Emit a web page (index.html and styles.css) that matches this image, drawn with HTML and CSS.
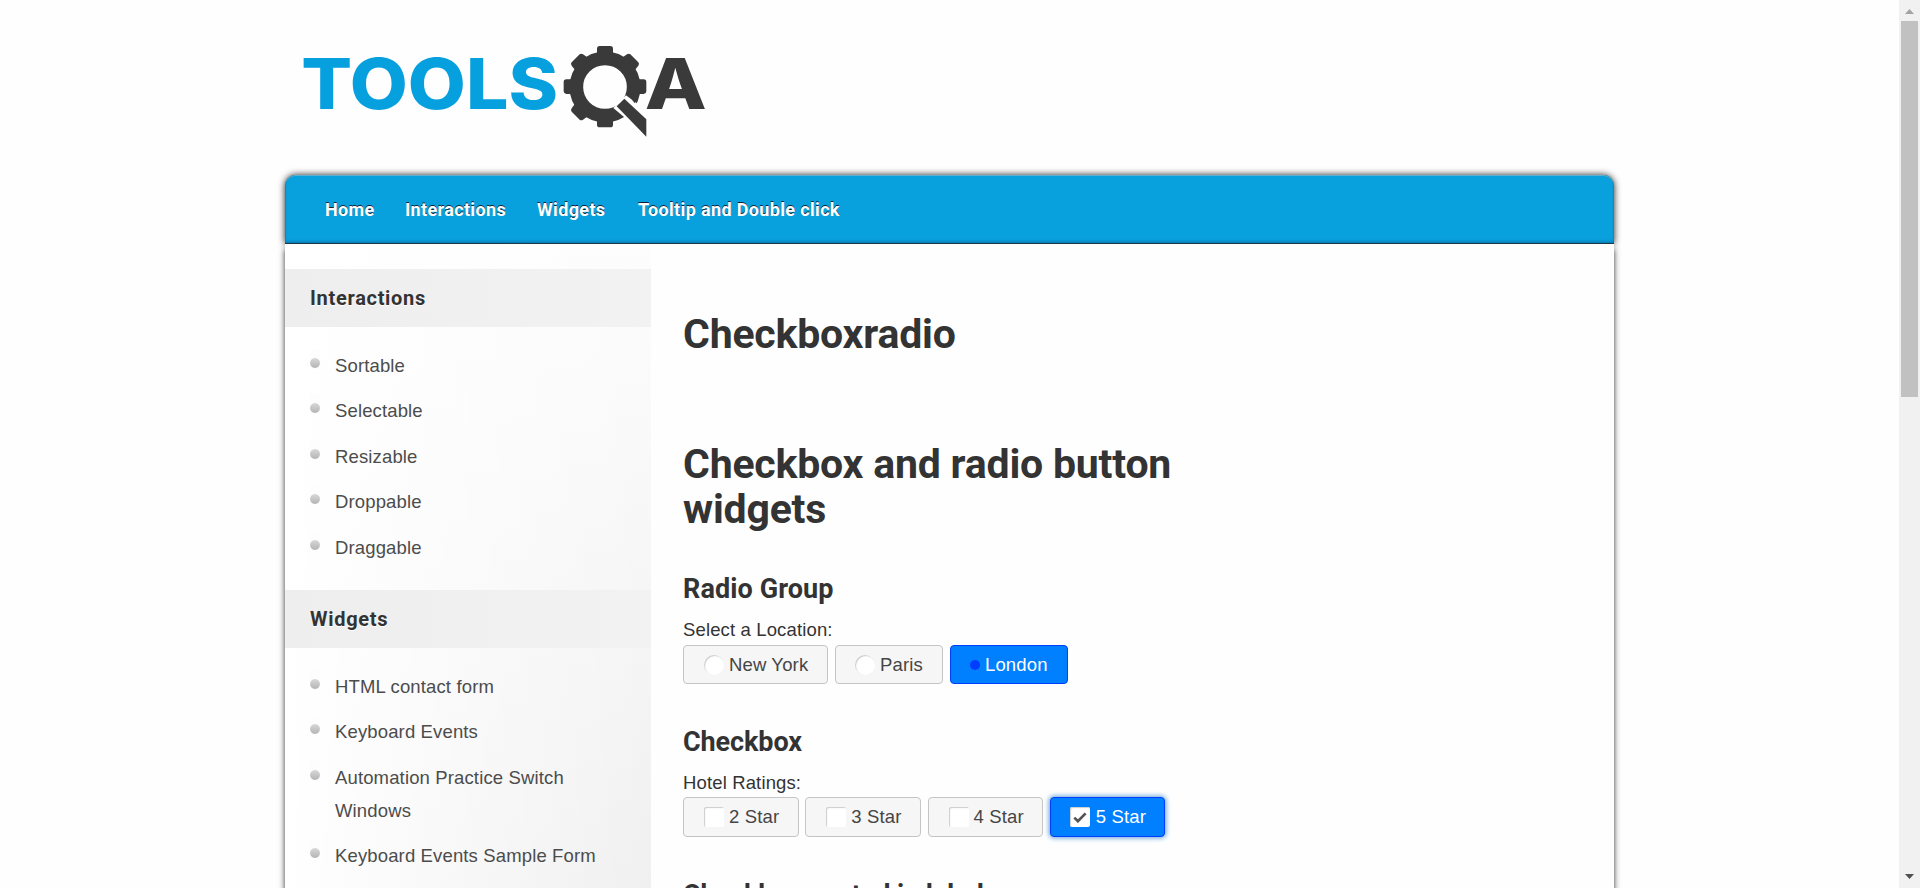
FILE: index.html
```html
<!DOCTYPE html>
<html lang="en">
<head>
<meta charset="utf-8">
<title>Checkboxradio</title>
<link rel="stylesheet" href="styles.css">
</head>
<body>
<div class="page">
  <div class="wrap">
    <header class="header">
      <svg class="logo" viewBox="0 0 1320 360" width="440" height="120">
        <text class="logo-tools" x="64" y="236" textLength="770" lengthAdjust="spacingAndGlyphs">TOOLS</text>
        <g fill="#3a3a3a">
          <circle cx="975" cy="171" r="86" fill="none" stroke="#3a3a3a" stroke-width="41"/>
          <path d="M943 85q8-2 8-10V56q0-8 8-8h32q8 0 8 8v19q0 8 8 10z"/>
          <path d="M943 257q8 2 8 10v17q0 8 8 8h32q8 0 8-8v-17q0-8 8-10z"/>
          <path d="M885 140q-2 7-9 8h-17q-8 0-8 8v28q0 7 8 8h17q7 1 9 9z"/>
          <path d="M1065 140q2 7 9 8h17q8 0 8 8v28q0 7-8 8h-17q-7 1-9 9z"/>
          <path d="M884 134q6-7 2-13l-11-14q-4-6 0-10l24-24q4-4 10 0l15 10q7 4 14-3z"/>
          <path d="M1066 134q-6-7-2-13l11-14q4-6 0-10l-24-24q-4-4-10 0l-15 10q-7 4-14-3z"/>
          <path d="M884 206q6 7 2 14l-11 15q-4 6 0 10l24 24q4 4 10 0l15-11q7-4 14 3z"/>
          <path d="M1000 234l38-38 30 22 50 46v70z" fill="#fefefe"/>
          <path d="M1042 190l22 30 14-40z"/>
          <path d="M1010 229l23-23 66 62v52z"/>
        </g>
        <text class="logo-a" x="1094" y="236" textLength="186" lengthAdjust="spacingAndGlyphs">A</text>
      </svg>
    </header>
    <nav class="nav">
      <a class="n1">Home</a><a class="n2">Interactions</a><a class="n3">Widgets</a><a class="n4">Tooltip and Double click</a>
    </nav>
    <div class="body">
      <aside class="sidebar">
        <h3 class="side-title s1">Interactions</h3>
        <ul class="list">
          <li>Sortable</li><li>Selectable</li><li>Resizable</li><li>Droppable</li><li>Draggable</li>
        </ul>
        <h3 class="side-title s2">Widgets</h3>
        <ul class="list">
          <li>HTML contact form</li><li>Keyboard Events</li><li>Automation Practice Switch Windows</li><li>Keyboard Events Sample Form</li>
        </ul>
      </aside>
      <main class="main">
        <h1 class="title">Checkboxradio</h1>
        <h1 class="title second">Checkbox and radio button<br>widgets</h1>
        <h2 class="sub">Radio Group</h2>
        <p class="legend">Select a Location:</p>
        <div class="row">
          <label class="btn b1"><i class="radio"></i>New York</label>
          <label class="btn b2"><i class="radio"></i>Paris</label>
          <label class="btn b3 on"><i class="radio"></i>London</label>
        </div>
        <h2 class="sub sub2">Checkbox</h2>
        <p class="legend">Hotel Ratings:</p>
        <div class="row stars">
          <label class="btn"><i class="check"></i>2 Star</label>
          <label class="btn"><i class="check"></i>3 Star</label>
          <label class="btn"><i class="check"></i>4 Star</label>
          <label class="btn on focus"><i class="check"><svg width="14" height="11" viewBox="0 0 14 11"><path d="M1.3 5.6l3.6 3.6L12.6 1.4" fill="none" stroke="#555" stroke-width="2.7"/></svg></i>5 Star</label>
        </div>
        <h2 class="sub sub3">Checkbox nested in label</h2>
      </main>
    </div>
  </div>
  <div class="scrollbar">
    <svg class="arrow" width="9" height="5" viewBox="0 0 9 5"><path d="M0 5L4.500 0L9 5z" fill="#a3a3a3"/></svg>
    <div class="thumb"></div>
    <svg class="arrow" width="9" height="5" viewBox="0 0 9 5"><path d="M0 0L4.500 5L9 0z" fill="#505050"/></svg>
  </div>
</div>
</body>
</html>
```
FILE: styles.css
```css
* { box-sizing: border-box; }
body { margin: 0; background: #fefefe; font: 18.5px/33px "Liberation Sans", Arial, sans-serif; letter-spacing: .14px; color: #333; overflow: hidden; }
h1, h2, h3, p, ul { margin: 0; padding: 0; }
.page { display: flex; height: 888px; overflow: hidden; }
.wrap { width: 1329px; margin: 0 auto; display: flex; flex-direction: column; }
.header { height: 175px; flex: none; padding-top: 30px; }
.logo { display: block; margin-left: -5px; letter-spacing: 0; }
.logo-tools { font: 800 209px Inter, sans-serif; fill: #06a0de; }
.logo-a { font: 800 209px Inter, sans-serif; fill: #3a3a3a; }
.nav { height: 69px; flex: none; display: flex; padding: 0 40px; background: #09a1dd; border-bottom: 1px solid #1d3a48; border-radius: 11px 11px 0 0; box-shadow: 0 0 7px #222, inset 0 1px 0 #5fb0cf, inset 0 -2px 3px rgba(0,60,110,.25), inset 0 0 1px #033; }
.nav a { font: bold 18px/70px Roboto, sans-serif; letter-spacing: .35px; color: #fff; text-shadow: 0 -1px 0 #123; white-space: nowrap; }
.n1 { width: 80px; }
.n2 { width: 132px; }
.n3 { width: 101px; }
.body { flex: 1; min-height: 0; display: flex; background: #fefefe; box-shadow: 0 5px 6px #333; position: relative; clip-path: inset(0 -12px 0 -12px); }
.sidebar { width: 366px; flex: none; padding-top: 25px; background: linear-gradient(to right, #fff, rgba(255,255,255,0)), linear-gradient(to bottom, #fdfdfd, #f0f0f0); }
.side-title { height: 58px; padding-left: 25px; background: linear-gradient(to right, #eee, #f2f2f2); font: bold 20px/58px Roboto, sans-serif; letter-spacing: .7px; text-shadow: 0 1px 0 #fff; }
.list { list-style: none; padding: 21.700px 40px 22px 25px; height: 263px; }
.list li { padding-left: 25px; margin-bottom: 12.600px; line-height: 33px; color: #4c4c4c; background: radial-gradient(circle at 5px 14px, rgba(0,0,0,0) 4.400px, #fdfdfd 5.400px) 0 0/10px 20px no-repeat, linear-gradient(#d8d8d8 9px, #b4b4b4 19px) 0 0/10px 20px no-repeat; }
.main { flex: 1; padding-left: 32px; overflow: hidden; }
.title { font: bold 41px/45px Roboto, sans-serif; letter-spacing: -.2px; margin-top: 68px; padding-left: 0; white-space: nowrap; }
.second { margin-top: 85px; }
.sub { font: bold 27px/32px Roboto, sans-serif; letter-spacing: .1px; margin-top: 41px; padding-left: 0; white-space: nowrap; }
.sub2, .sub3 { margin-top: 42px; letter-spacing: -.1px; }
.legend { height: 33px; line-height: 33px; padding-left: 0; margin-top: 8px; }
.row { display: flex; gap: 7px; height: 39px; margin-top: -1px; }
.btn { display: flex; align-items: center; border: 1px solid #c5c5c5; border-radius: 4px; background: #f6f6f6; color: #454545; padding-left: 20px; white-space: nowrap; line-height: 36px; }
.b1 { width: 145px; }
.b2 { width: 108px; padding-left: 19px; }
.b3 { width: 118px; padding-left: 19px; }
.stars { height: 40px; gap: 6.700px; margin-top: -2px; }
.stars .btn { width: 115.600px; }
.radio, .check { width: 20px; height: 20px; flex: none; background: #fff; margin-right: 5px; box-shadow: inset 1px 1px 1px #ccc; }
.radio { border-radius: 50%; }
.check { border-radius: 2px; display: flex; align-items: center; justify-content: center; }
.on { background: #007fff; border-color: #003eff; color: #fff; }
.on .radio { width: 10px; height: 10px; background: #003eff; box-shadow: none; }
.stars .focus { box-shadow: 0 0 5px 1px #5e9ed6; padding-left: 19px; }
.focus .check { margin-right: 6px; }
.scrollbar { width: 21px; flex: none; background: #f1f1f1; display: flex; flex-direction: column; align-items: center; padding: 9px 0 9px 0; justify-content: space-between; }
.thumb { width: 17px; height: 376px; background: #c1c1c1; margin: 7px 0 auto; }
.arrow { flex: none; }
```
